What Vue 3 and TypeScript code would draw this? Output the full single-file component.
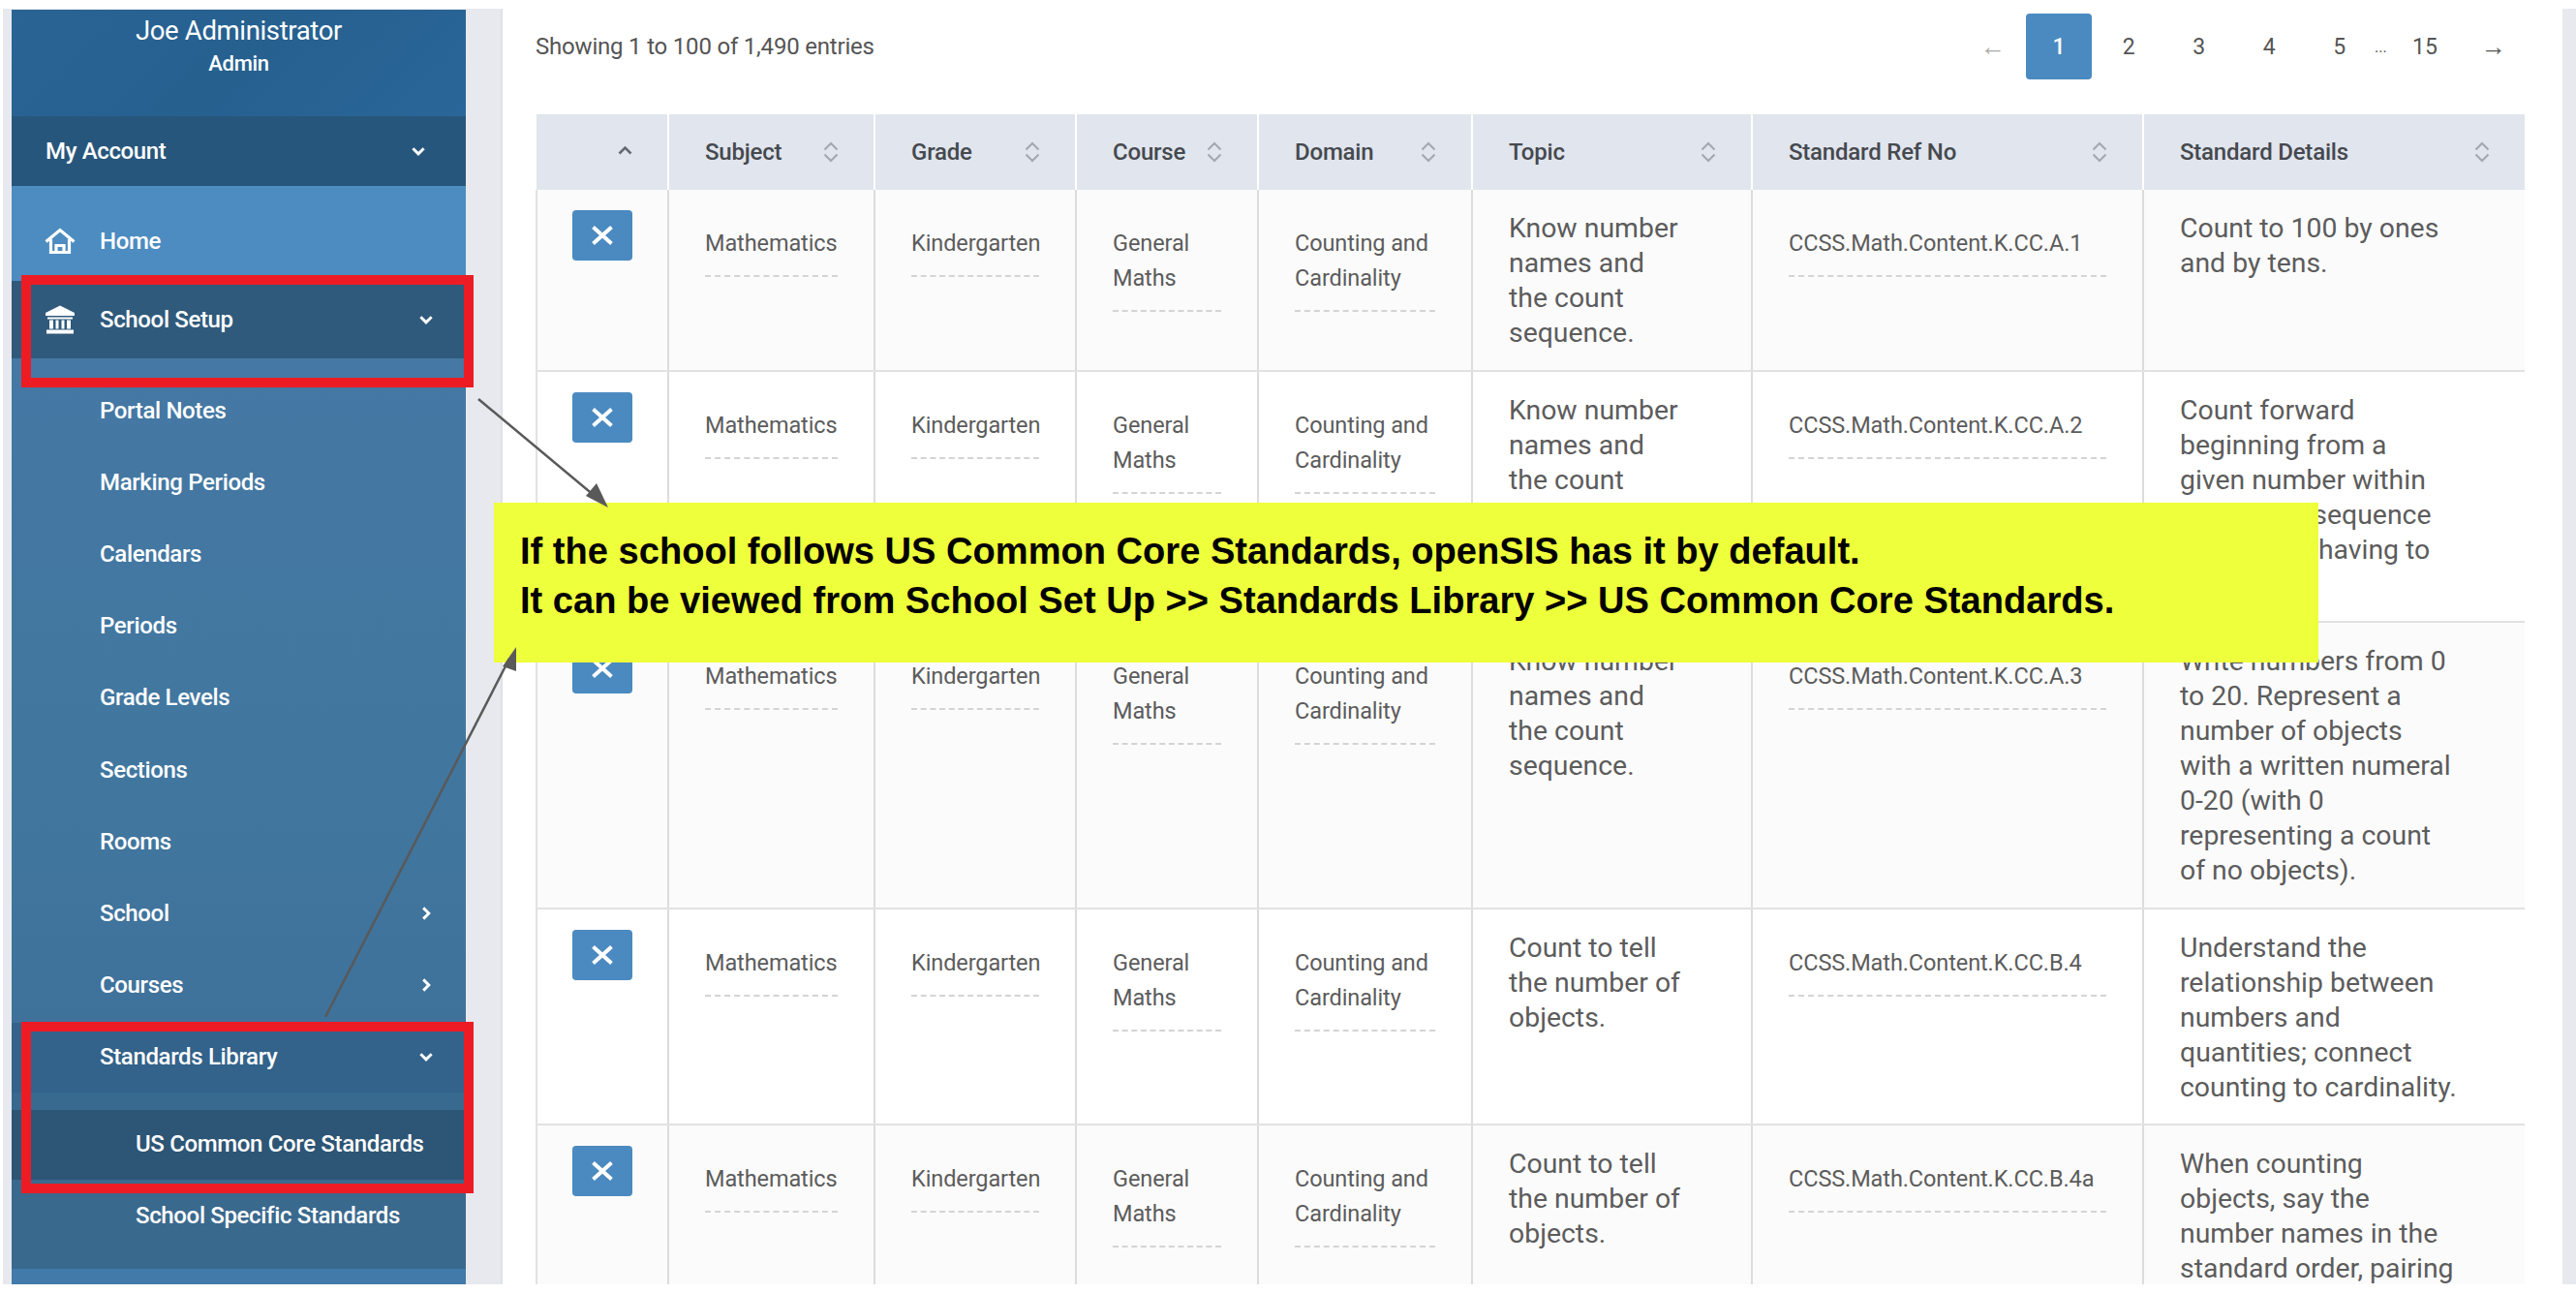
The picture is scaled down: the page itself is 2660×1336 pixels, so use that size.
<script setup lang="ts">
interface NavItem {
  label: string
  chevron?: boolean
}

interface StandardRow {
  ref: string
  topic: string
  details: string
}

const subItems: NavItem[] = [
  { label: 'Portal Notes' },
  { label: 'Marking Periods' },
  { label: 'Calendars' },
  { label: 'Periods' },
  { label: 'Grade Levels' },
  { label: 'Sections' },
  { label: 'Rooms' },
  { label: 'School', chevron: true },
  { label: 'Courses', chevron: true },
]

const columns = [
  { label: 'Subject', width: 213 },
  { label: 'Grade', width: 208 },
  { label: 'Course', width: 188 },
  { label: 'Domain', width: 221 },
  { label: 'Topic', width: 289 },
  { label: 'Standard Ref No', width: 404 },
  { label: 'Standard Details', width: 394 },
]

const rows: StandardRow[] = [
  {
    ref: 'CCSS.Math.Content.K.CC.A.1',
    topic: 'Know number names and the count sequence.',
    details: 'Count to 100 by ones and by tens.',
  },
  {
    ref: 'CCSS.Math.Content.K.CC.A.2',
    topic: 'Know number names and the count sequence.',
    details:
      'Count forward beginning from a given number within the known sequence (instead of having to begin at 1).',
  },
  {
    ref: 'CCSS.Math.Content.K.CC.A.3',
    topic: 'Know number names and the count sequence.',
    details:
      'Write numbers from 0 to 20. Represent a number of objects with a written numeral 0-20 (with 0 representing a count of no objects).',
  },
  {
    ref: 'CCSS.Math.Content.K.CC.B.4',
    topic: 'Count to tell the number of objects.',
    details:
      'Understand the relationship between numbers and quantities; connect counting to cardinality.',
  },
  {
    ref: 'CCSS.Math.Content.K.CC.B.4a',
    topic: 'Count to tell the number of objects.',
    details:
      'When counting objects, say the number names in the standard order, pairing each object with one number name.',
  },
]

const pages = ['2', '3', '4', '5']
</script>

<template>
  <div class="page">
    <div class="shell">
      <aside class="sidebar">
        <div class="profile">
          <div class="profile-name">Joe Administrator</div>
          <div class="profile-role">Admin</div>
        </div>
        <div class="account">
          <span>My Account</span>
          <svg class="chev chev-account" viewBox="0 0 16 16"><path d="M3 5.500l5 5 5-5" /></svg>
        </div>
        <div class="home">
          <svg class="nav-icon icon-home" viewBox="0 0 32 28">
            <path d="M1.500 14.500 16 2.500l14.500 12M6.500 12v13.500h19V12M12 25v-6.500h8V25" />
          </svg>
          <span>Home</span>
        </div>
        <div class="setup">
          <svg class="nav-icon icon-bank" viewBox="0 0 32 30">
            <path d="M16 0.500 1 8v3h30V8z" />
            <path d="M3 12.500h26v2H3zM5 15.500h4v9H5zM11.500 15.500h3v9h-3zM17.500 15.500h3v9h-3zM23 15.500h4v9h-4zM2 25.500h28v4H2z" />
          </svg>
          <span>School Setup</span>
          <svg class="chev" viewBox="0 0 16 16"><path d="M3 5.500l5 5 5-5" /></svg>
        </div>
        <div class="submenu">
          <div v-for="item in subItems" :key="item.label" class="sub-row">
            <span>{{ item.label }}</span>
            <svg v-if="item.chevron" class="chev" viewBox="0 0 16 16"><path d="M5.500 3l5 5-5 5" /></svg>
          </div>
        </div>
        <div class="library">
          <span>Standards Library</span>
          <svg class="chev" viewBox="0 0 16 16"><path d="M3 5.500l5 5 5-5" /></svg>
        </div>
        <div class="library-gap"></div>
        <div class="leaf leaf-active">US Common Core Standards</div>
        <div class="leaf leaf-plain">School Specific Standards</div>
        <div class="sidebar-end"></div>
      </aside>

      <main class="content">
        <div class="toolbar">
          <div class="entries">Showing 1 to 100 of 1,490 entries</div>
          <div class="pager">
            <span class="pager-arrow muted">&larr;</span>
            <span class="pager-current">1</span>
            <span v-for="p in pages" :key="p" class="pager-num">{{ p }}</span>
            <span class="pager-dots">...</span>
            <span class="pager-last">15</span>
            <span class="pager-arrow pager-next">&rarr;</span>
          </div>
        </div>

        <table class="grid">
          <colgroup>
            <col class="col-action" />
            <col v-for="c in columns" :key="c.label" :style="{ width: c.width + 'px' }" />
          </colgroup>
          <thead>
            <tr>
              <th class="th-action">
                <svg class="sort-up" viewBox="0 0 15 10"><path d="M1.500 8.500l6-6 6 6" /></svg>
              </th>
              <th v-for="c in columns" :key="c.label">
                <div class="th-inner">
                  <span>{{ c.label }}</span>
                  <svg class="sort" viewBox="0 0 16 24">
                    <path d="M1.500 9.500 8 3l6.500 6.500M1.500 14.500 8 21l6.500-6.500" />
                  </svg>
                </div>
              </th>
            </tr>
          </thead>
          <tbody>
            <tr v-for="row in rows" :key="row.ref">
              <td class="td-action">
                <button class="remove" type="button">
                  <svg viewBox="0 0 24 20"><path d="M2.500 1.500l19 17M21.500 1.500l-19 17" /></svg>
                </button>
              </td>
              <td class="td-small"><span class="dotted">Mathematics</span></td>
              <td class="td-small"><span class="dotted">Kindergarten</span></td>
              <td class="td-small"><span class="dotted">General Maths</span></td>
              <td class="td-small"><span class="dotted">Counting and Cardinality</span></td>
              <td class="td-text">{{ row.topic }}</td>
              <td class="td-small"><span class="dotted">{{ row.ref }}</span></td>
              <td class="td-text">{{ row.details }}</td>
            </tr>
          </tbody>
        </table>
      </main>
      <div class="right-gutter"></div>
    </div>

    <!-- annotation layer pasted over the screenshot -->
    <div class="outline outline-setup"></div>
    <div class="outline outline-library"></div>
    <div class="note">
      <p>If the school follows US Common Core Standards, openSIS has it by default.</p>
      <p>It can be viewed from School Set Up &gt;&gt; Standards Library &gt;&gt; US Common Core Standards.</p>
    </div>
    <svg class="arrows" viewBox="0 0 2660 1336">
      <path class="arrow-line" d="M494 412 620 517" />
      <path class="arrow-head" d="M628 524 605 512 616 499z" />
      <path class="arrow-line" d="M336 1050 526 680" />
      <path class="arrow-head" d="M533 668 519 688 533 693z" />
    </svg>
  </div>
</template>

<style>
html,
body {
  margin: 0;
  background: #fff;
}
</style>

<style scoped>
.page {
  position: relative;
  width: 2660px;
  height: 1336px;
  padding: 9px 0 10px 3px;
  box-sizing: border-box;
  overflow: hidden;
  background: #fff;
  font-family: Roboto, 'Liberation Sans', sans-serif;
}

.shell {
  display: flex;
  height: 100%;
  background: #e8e9ef;
  overflow: hidden;
}

/* sidebar */
.sidebar {
  width: 469px;
  margin: 1px 36px 0 9px;
  flex: none;
  display: flex;
  flex-direction: column;
  color: #fff;
  font-size: 24px;
  font-weight: 500;
  letter-spacing: -0.35px;
  background: #427aa9;
}

.profile {
  height: 110px;
  box-sizing: border-box;
  text-align: center;
  background: linear-gradient(135deg, #2a6495 0%, #26608f 50%, #2a6699 100%);
}

.profile-name {
  font-size: 27.500px;
  font-weight: 400;
  line-height: 44px;
}

.profile-role {
  font-size: 22px;
  line-height: 24px;
}

.account {
  height: 72px;
  display: flex;
  align-items: center;
  justify-content: space-between;
  padding: 0 40px 0 35px;
  background: #27567c;
}

.home {
  height: 98px;
  display: flex;
  align-items: center;
  padding: 16px 0 0 34px;
  box-sizing: border-box;
  background: #4d8cc0;
}

.setup {
  height: 80px;
  display: flex;
  align-items: center;
  padding: 0 32px 0 34px;
  background: #2f5a7c;
}

.nav-icon {
  width: 32px;
  height: 28px;
  margin-right: 25px;
  flex: none;
}

.icon-home {
  fill: none;
  stroke: #fff;
  stroke-width: 3.200;
}

.icon-bank {
  height: 30px;
  fill: #fff;
}

.setup .chev {
  margin-left: auto;
}

.chev {
  width: 18px;
  height: 18px;
  flex: none;
  fill: none;
  stroke: #fff;
  stroke-width: 2.600;
}

.submenu {
  padding: 17px 0 2px;
  background: linear-gradient(180deg, #4578a4 0%, #41779f 60%, #3f729b 100%);
}

.sub-row {
  height: 74.100px;
  display: flex;
  align-items: center;
  justify-content: space-between;
  padding: 0 32px 0 91px;
}

.library {
  height: 72px;
  box-sizing: border-box;
  padding: 0 32px 2px 91px;
  display: flex;
  align-items: center;
  justify-content: space-between;
  background: #33628a;
}

.library-gap {
  height: 18px;
  background: #38698f;
}

.leaf {
  display: flex;
  align-items: center;
  padding-left: 128px;
}

.leaf-active {
  height: 72px;
  box-sizing: border-box;
  padding-bottom: 2px;
  background: #2d5575;
}

.leaf-plain {
  height: 74px;
  background: #3a698e;
}

.sidebar-end {
  height: 18px;
  background: #3a698e;
}

/* main panel */
.content {
  width: 2129px;
  flex: none;
  box-sizing: border-box;
  padding: 5px 38px 0 34px;
  background: #fff;
  border-left: 2px solid #dfe1e6;
}

.toolbar {
  height: 104px;
  display: flex;
  justify-content: space-between;
  align-items: flex-start;
}

.entries {
  margin-top: 19px;
  font-size: 24px;
  line-height: 30px;
  color: #555;
  letter-spacing: -0.2px;
}

.pager {
  display: flex;
  align-items: center;
  height: 68px;
  color: #555;
  font-size: 23px;
  margin-right: 16px;
}

.pager-current {
  width: 68px;
  height: 68px;
  margin: 0 2px 0 17px;
  display: flex;
  align-items: center;
  justify-content: center;
  background: #4a8ac0;
  border-radius: 4px;
  color: #fff;
  font-weight: 500;
}

.pager-num {
  width: 72.500px;
  text-align: center;
}

.pager-dots {
  width: 10px;
  font-size: 16px;
  text-align: center;
}

.pager-last {
  width: 84px;
  text-align: center;
}

.pager-arrow {
  width: 34px;
  text-align: center;
  font-size: 26px;
}

.pager-next {
  margin-left: 12px;
}

.muted {
  color: #aaa;
}

.grid {
  table-layout: fixed;
  width: 2053px;
  border-collapse: collapse;
  color: #5a5a5a;
}

.col-action {
  width: 136px;
}

th {
  box-sizing: border-box;
  height: 78px;
  padding: 0 36px 0 37px;
  background: #e1e5ed;
  border-left: 2px solid #fff;
  font-size: 24px;
  font-weight: 500;
  color: #45494f;
  text-align: left;
  letter-spacing: -0.2px;
}

th:first-child {
  border-left: 0;
}

.th-inner {
  display: flex;
  align-items: center;
  justify-content: space-between;
}

.sort {
  width: 16px;
  height: 24px;
  flex: none;
  fill: none;
  stroke: #a3a7af;
  stroke-width: 2;
}

.th-action {
  padding: 0 0 5px 84px;
}

.sort-up {
  display: block;
  width: 15px;
  height: 10px;
  fill: none;
  stroke: #666a70;
  stroke-width: 2.600;
}

td {
  padding: 22px 36px 19.500px 37px;
  vertical-align: top;
  border-left: 2px solid #dcdcdc;
  border-bottom: 2px solid #e2e2e2;
  font-size: 28.400px;
  line-height: 36px;
  color: #5c5c5c;
}

tbody tr:nth-child(odd) td {
  background: #fbfbfb;
}

.td-text {
  padding-right: 70px;
}

.td-action {
  padding: 21px 0 0 36px;
  border-left: 2px solid #e2e2e2;
}

.td-small {
  padding-top: 37px;
  padding-right: 37px;
  font-size: 23.500px;
}

.dotted {
  display: block;
  padding-bottom: 15px;
  border-bottom: 2px dashed #d4d4d4;
  letter-spacing: -0.1px;
}

.remove {
  display: flex;
  align-items: center;
  justify-content: center;
  width: 62px;
  height: 52px;
  padding: 0;
  border: 0;
  border-radius: 4px;
  background: #4a8ac0;
}

.remove svg {
  width: 24px;
  height: 20px;
  fill: none;
  stroke: #fff;
  stroke-width: 4;
}

.right-gutter {
  flex: 1;
}

/* annotations */
.outline {
  position: absolute;
  left: 22px;
  width: 467px;
  box-sizing: border-box;
  border: 10px solid #ed1c24;
}

.outline-setup {
  top: 284px;
  height: 116px;
}

.outline-library {
  top: 1055px;
  height: 177px;
}

.note {
  position: absolute;
  left: 510px;
  top: 519px;
  width: 1884px;
  height: 165px;
  box-sizing: border-box;
  padding: 25px 0 0 27px;
  background: #eeff3b;
  color: #000;
  font-family: 'Liberation Sans', Arial, sans-serif;
  font-size: 38.100px;
  font-weight: 700;
  line-height: 51px;
}

.note p {
  margin: 0;
  white-space: nowrap;
}

.arrows {
  position: absolute;
  left: 0;
  top: 0;
  width: 2660px;
  height: 1336px;
  pointer-events: none;
}

.arrow-line {
  fill: none;
  stroke: #595959;
  stroke-width: 2.500;
}

.arrow-head {
  fill: #595959;
}
</style>
